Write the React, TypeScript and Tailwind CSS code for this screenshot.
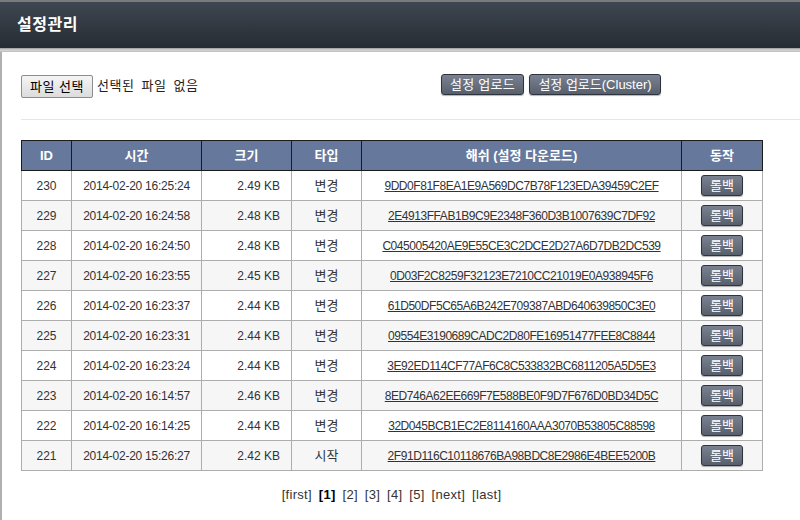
import React from "react";

const rows = [
  ["230", "2014-02-20 16:25:24", "2.49 KB", "변경", "9DD0F81F8EA1E9A569DC7B78F123EDA39459C2EF"],
  ["229", "2014-02-20 16:24:58", "2.48 KB", "변경", "2E4913FFAB1B9C9E2348F360D3B1007639C7DF92"],
  ["228", "2014-02-20 16:24:50", "2.48 KB", "변경", "C045005420AE9E55CE3C2DCE2D27A6D7DB2DC539"],
  ["227", "2014-02-20 16:23:55", "2.45 KB", "변경", "0D03F2C8259F32123E7210CC21019E0A938945F6"],
  ["226", "2014-02-20 16:23:37", "2.44 KB", "변경", "61D50DF5C65A6B242E709387ABD640639850C3E0"],
  ["225", "2014-02-20 16:23:31", "2.44 KB", "변경", "09554E3190689CADC2D80FE16951477FEE8C8844"],
  ["224", "2014-02-20 16:23:24", "2.44 KB", "변경", "3E92ED114CF77AF6C8C533832BC6811205A5D5E3"],
  ["223", "2014-02-20 16:14:57", "2.46 KB", "변경", "8ED746A62EE669F7E588BE0F9D7F676D0BD34D5C"],
  ["222", "2014-02-20 16:14:25", "2.44 KB", "변경", "32D045BCB1EC2E8114160AAA3070B53805C88598"],
  ["221", "2014-02-20 15:26:27", "2.42 KB", "시작", "2F91D116C10118676BA98BDC8E2986E4BEE5200B"],
];

const font = { fontFamily: '"Liberation Sans", "Noto Sans CJK KR", sans-serif' };

function DarkBtn({ children, className = "" }: { children: React.ReactNode; className?: string }) {
  return (
    <button
      className={
        "h-[21px] rounded-[3px] border border-[#2f343c] bg-gradient-to-b from-[#7a8291] to-[#585f6c] text-white leading-none shadow-[0_1px_1px_rgba(0,0,0,0.3)] " +
        className
      }
    >
      {children}
    </button>
  );
}

export default function App() {
  return (
    <div className="w-[800px] h-[520px] bg-white overflow-hidden text-[12px] text-[#333]" style={font}>
      <div className="h-[48px] border-t-2 border-[#7a7a7a] bg-gradient-to-b from-[#3e4751] to-[#262c33] flex items-center pl-[17px]">
        <span className="text-white font-bold text-[16px] tracking-[0.5px]">설정관리</span>
      </div>
      <div className="h-[4px] bg-gradient-to-b from-[#9a9a9a] via-[#d6d6d6] to-[#bdbdbd]" />
      <div className="border-l-2 border-[#b0b0b0] h-[468px] pl-[19px]">
        <div className="flex items-center h-[68px] pt-[1px] border-b border-[#e6e6e6]">
          <div className="flex items-center w-[420px]">
            <button className="h-[23px] w-[72px] border border-[#8d8d8d] rounded-[2px] bg-gradient-to-b from-[#f5f5f5] to-[#dcdcdc] text-[13px] text-black leading-none tracking-[0.5px]">
              파일 선택
            </button>
            <span className="ml-[4px] text-[13px] text-[#222] tracking-[0.5px] [word-spacing:3px]">선택된 파일 없음</span>
          </div>
          <div className="flex gap-[5px] -mt-[3px]">
            <DarkBtn className="w-[83px] text-[13px] tracking-[0.3px]">설정 업로드</DarkBtn>
            <DarkBtn className="w-[132px] text-[13px]">설정 업로드(Cluster)</DarkBtn>
          </div>
        </div>
        <table className="mt-[20px] border-collapse w-[741px] table-fixed">
          <colgroup>
            <col className="w-[50px]" />
            <col className="w-[130px]" />
            <col className="w-[90px]" />
            <col className="w-[70px]" />
            <col className="w-[320px]" />
            <col className="w-[81px]" />
          </colgroup>
          <thead>
            <tr className="h-[30px] bg-[#66799c] text-white font-bold">
              {["ID", "시간", "크기", "타입", "해쉬 (설정 다운로드)", "동작"].map((h) => (
                <th key={h} className="border border-[#1b1b1b] text-center font-bold text-[13px]">
                  {h}
                </th>
              ))}
            </tr>
          </thead>
          <tbody>
            {rows.map((r, i) => (
              <tr key={r[0]} className={"h-[30px] " + (i % 2 === 1 ? "bg-[#f6f6f6]" : "bg-white")}>
                <td className="border border-[#adadad] text-center">{r[0]}</td>
                <td className="border border-[#adadad] text-center tracking-[-0.25px]">{r[1]}</td>
                <td className="border border-[#adadad] text-right pr-[11px]">{r[2]}</td>
                <td className="border border-[#adadad] text-center text-[13px]">{r[3]}</td>
                <td className="border border-[#adadad] text-center">
                  <span className="underline tracking-[-0.45px]">{r[4]}</span>
                </td>
                <td className="border border-[#adadad] text-center">
                  <DarkBtn className="w-[42px] text-[13px]">롤백</DarkBtn>
                </td>
              </tr>
            ))}
          </tbody>
        </table>
        <div className="w-[741px] text-center mt-[14px] text-[13px] text-[#333] [word-spacing:3px] tracking-[0.3px]">
          [first] <b className="text-black">[1]</b> [2] [3] [4] [5] [next] [last]
        </div>
      </div>
    </div>
  );
}
